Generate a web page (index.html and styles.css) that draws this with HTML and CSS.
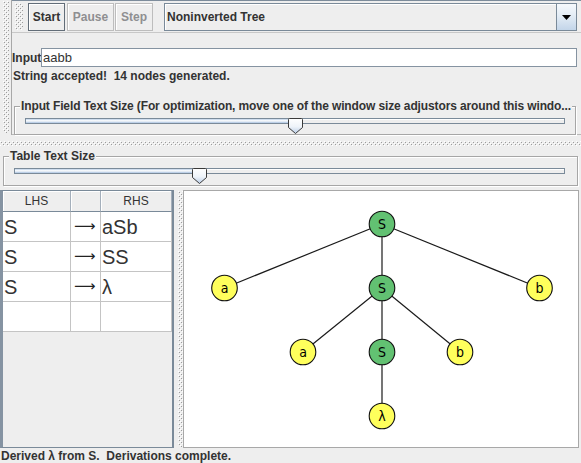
FILE: index.html
```html
<!DOCTYPE html>
<html>
<head>
<meta charset="utf-8">
<link rel="stylesheet" href="styles.css">
</head>
<body>
<svg class="defs" width="0" height="0" aria-hidden="true">
  <defs>
    <pattern id="bump" width="4" height="4" patternUnits="userSpaceOnUse">
      <rect x="0" y="0" width="1" height="1" fill="#ffffff"/>
      <rect x="2" y="2" width="1" height="1" fill="#ffffff"/>
      <rect x="1" y="1" width="1" height="1" fill="#9c9c9c"/>
      <rect x="3" y="3" width="1" height="1" fill="#9c9c9c"/>
    </pattern>
    <linearGradient id="thumbg" x1="0" y1="0" x2="0" y2="1">
      <stop offset="0" stop-color="#ffffff"/>
      <stop offset="0.55" stop-color="#eef3f9"/>
      <stop offset="1" stop-color="#b9cde6"/>
    </linearGradient>
  </defs>
</svg>
<div class="app">
  <div class="top">
    <div class="vgrip"><svg class="bumps"><rect width="100%" height="100%" fill="url(#bump)"/></svg></div>
    <div class="topmain">
      <div class="toolbar">
        <svg class="grip bumps"><rect width="100%" height="100%" fill="url(#bump)"/></svg>
        <button class="btn btn-start">Start</button>
        <button class="btn btn-off btn-pause">Pause</button>
        <button class="btn btn-off btn-step">Step</button>
        <div class="combo">
          <span class="combo-text">Noninverted Tree</span>
          <span class="combo-arrow"><svg width="9" height="5" viewBox="0 0 9 5"><path d="M0 0H9L4.5 5Z" fill="#000"/></svg></span>
        </div>
      </div>
      <div class="inputrow">
        <span class="inlabel">Input</span>
        <div class="field">aabb</div>
      </div>
      <div class="msg">String accepted!  14 nodes generated.</div>
      <div class="tbox tbox1">
        <div class="tbox-title title1">Input Field Text Size (For optimization, move one of the window size adjustors around this windo...</div>
        <div class="slider">
          <div class="track"><div class="fill fill1"></div><div class="rest"></div></div>
          <svg class="thumb thumb1" width="15" height="16" viewBox="0 0 15 16"><path d="M1.5 0.5H13.5Q14.5 0.5 14.5 1.5V9.5L7.5 15.5L0.5 9.5V1.5Q0.5 0.5 1.5 0.5Z" fill="url(#thumbg)" stroke="#3a3a3a"/></svg>
        </div>
      </div>
    </div>
  </div>
  <div class="hdiv"><svg class="bumps"><rect width="100%" height="100%" fill="url(#bump)"/></svg></div>
  <div class="tbox tbox2">
    <div class="tbox-title">Table Text Size</div>
    <div class="slider slider2">
      <div class="track"><div class="fill fill2"></div><div class="rest"></div></div>
      <svg class="thumb thumb2" width="15" height="16" viewBox="0 0 15 16"><path d="M1.5 0.5H13.5Q14.5 0.5 14.5 1.5V9.5L7.5 15.5L0.5 9.5V1.5Q0.5 0.5 1.5 0.5Z" fill="url(#thumbg)" stroke="#3a3a3a"/></svg>
    </div>
  </div>
  <div class="bottom">
    <div class="tablepane">
      <div class="grid">
        <div class="th">LHS</div><div class="th"></div><div class="th">RHS</div>
        <div class="td">S</div><div class="td arrow">⟶</div><div class="td">aSb</div>
        <div class="td">S</div><div class="td arrow">⟶</div><div class="td">SS</div>
        <div class="td">S</div><div class="td arrow">⟶</div><div class="td">λ</div>
        <div class="td"></div><div class="td"></div><div class="td"></div>
      </div>
    </div>
    <div class="vdiv"><svg class="bumps"><rect width="100%" height="100%" fill="url(#bump)"/></svg></div>
    <div class="canvas">
      <svg class="tree" width="394" height="256" viewBox="184 189 394 256">
        <g stroke="#1a1a1a" stroke-width="1.2">
          <line x1="382" y1="222" x2="224.5" y2="286"/>
          <line x1="382" y1="222" x2="382" y2="286"/>
          <line x1="382" y1="222" x2="539.5" y2="286"/>
          <line x1="382" y1="286" x2="303" y2="350"/>
          <line x1="382" y1="286" x2="382" y2="350"/>
          <line x1="382" y1="286" x2="460" y2="350"/>
          <line x1="382" y1="350" x2="382" y2="414"/>
        </g>
        <g stroke="#111" stroke-width="1.1">
          <circle class="nt" cx="382" cy="222" r="12.8"/>
          <circle class="term" cx="224.5" cy="286" r="12.8"/>
          <circle class="nt" cx="382" cy="286" r="12.8"/>
          <circle class="term" cx="539.5" cy="286" r="12.8"/>
          <circle class="term" cx="303" cy="350" r="12.8"/>
          <circle class="nt" cx="382" cy="350" r="12.8"/>
          <circle class="term" cx="460" cy="350" r="12.8"/>
          <circle class="term" cx="382" cy="414" r="12.8"/>
        </g>
        <g class="lbl">
          <text x="382" y="227">S</text>
          <text x="224.5" y="291">a</text>
          <text x="382" y="291">S</text>
          <text x="539.5" y="291">b</text>
          <text x="303" y="355">a</text>
          <text x="382" y="355">S</text>
          <text x="460" y="355">b</text>
          <text x="382" y="419">λ</text>
        </g>
      </svg>
    </div>
  </div>
  <div class="status">Derived λ from S.  Derivations complete.</div>
</div>
</body>
</html>
```

FILE: styles.css
```css
html, body {
  margin: 0;
  padding: 0;
}
body {
  background: #eeeeee;
  font-family: "Liberation Sans", Arial, sans-serif;
  font-size: 12px;
  font-weight: bold;
  color: #333333;
}
.defs {
  position: absolute;
  width: 0;
  height: 0;
}
.app {
  width: 581px;
  height: 463px;
  display: flex;
  flex-direction: column;
  overflow: hidden;
}
.bumps {
  display: block;
}

/* top area */
.top {
  height: 135px;
  display: flex;
  flex: none;
}
.vgrip {
  width: 12px;
  box-sizing: border-box;
  border-right: 1px solid #a8a8a8;
  padding: 1px 2px 2px 3px;
  display: flex;
}
.vgrip .bumps {
  width: 6px;
  height: 100%;
}
.topmain {
  flex: 1;
  display: flex;
  flex-direction: column;
  border-bottom: 1px solid #b8b8b8;
  min-width: 0;
}
.toolbar {
  height: 33px;
  box-sizing: border-box;
  border-top: 1px solid #7d8c9b;
  border-bottom: 1px solid #c8c8c8;
  padding-top: 2px;
  display: flex;
  align-items: flex-start;
  flex: none;
}
.grip {
  width: 8px;
  height: 27px;
  margin: 0 5px 0 3px;
}
.btn {
  height: 28px;
  box-sizing: border-box;
  margin: 0;
  padding: 0;
  background: #eeeeee;
  font-family: "Liberation Sans", Arial, sans-serif;
  font-size: 12px;
  font-weight: bold;
  text-align: center;
}
.btn-start {
  width: 37px;
  margin-right: 2px;
  color: #333333;
  border: 1px solid #626d78;
  box-shadow: inset 1px 1px 0 #ffffff;
}
.btn-off {
  color: #8e8f91;
  border: 1px solid #bdbdbd;
  box-shadow: inset 1px 1px 0 #ffffff;
}
.btn-pause {
  width: 47px;
  margin-right: 1px;
}
.btn-step {
  width: 38px;
  margin-right: 11px;
}
.combo {
  width: 413px;
  height: 28px;
  box-sizing: border-box;
  border: 1px solid #7a8a99;
  box-shadow: inset 1px 1px 0 #ffffff;
  background: #eeeeee;
  display: flex;
  align-items: stretch;
}
.combo-text {
  padding-left: 2px;
  line-height: 26px;
}
.combo-arrow {
  margin-left: auto;
  width: 20px;
  box-sizing: border-box;
  border-left: 1px solid #7a8a99;
  background: linear-gradient(180deg, #f6f9fc 0%, #e3ecf5 45%, #c3d5e9 100%);
  display: flex;
  align-items: center;
  justify-content: center;
}
.combo-arrow svg {
  display: block;
}
.inputrow {
  margin-top: 15px;
  height: 19px;
  display: flex;
  align-items: center;
  flex: none;
}
.inlabel {
  width: 29px;
}
.field {
  width: 536px;
  height: 19px;
  box-sizing: border-box;
  border: 1px solid #8593a1;
  background: #ffffff;
  padding-left: 1px;
  font-size: 13px;
  font-weight: normal;
  line-height: 17px;
  color: #333333;
}
.msg {
  margin: 2px 0 0 1px;
  line-height: 14px;
  white-space: pre;
}

/* titled borders */
.tbox {
  border: 1px solid #a6a6a6;
  box-shadow: inset 1px 1px 0 #ffffff, 1px 1px 0 #ffffff;
  flex: none;
}
.tbox-title {
  width: max-content;
  margin: -8px 0 0 -5px;
  padding: 0 1px;
  line-height: 14px;
  white-space: nowrap;
  background: #eeeeee;
}
.title1 {
  letter-spacing: -0.12px;
}
.tbox1 {
  margin: 23px 5px 0 2px;
  padding: 0 10px 0 10px;
}
.tbox2 {
  margin: 7px 3px 4px 3px;
  padding: 0 12px 0 10px;
}
.slider {
  height: 16px;
  margin-top: 2px;
  position: relative;
}
.slider2 {
  height: 17px;
  margin-top: 3px;
}
.track {
  margin-top: 5px;
  height: 6px;
  display: flex;
}
.fill {
  height: 6px;
  box-sizing: border-box;
  border: 1px solid #7a8a99;
  border-right: none;
  background: linear-gradient(180deg, #bcd0e8 0%, #ffffff 45%, #a9c2e0 100%);
}
.fill1 {
  width: 270px;
}
.fill2 {
  width: 185px;
}
.rest {
  flex: 1;
  height: 6px;
  box-sizing: border-box;
  border: 1px solid #7a8a99;
  border-left: none;
  background: #eeeeee;
  box-shadow: inset 0 1px 0 #ffffff;
}
.thumb {
  position: absolute;
  top: 0;
  display: block;
}
.thumb1 {
  left: 263px;
}
.thumb2 {
  left: 178px;
}

/* split divider */
.hdiv {
  height: 14px;
  box-sizing: border-box;
  padding-top: 6px;
  flex: none;
}
.hdiv .bumps {
  width: 100%;
  height: 5px;
}

/* bottom */
.bottom {
  height: 258px;
  display: flex;
  flex: none;
}
.tablepane {
  width: 174px;
  box-sizing: border-box;
  border-left: 3px solid #8593a2;
  border-top: 1px solid #7a8a99;
  border-right: 2px solid #7a8a99;
  border-bottom: 1px solid #7a8a99;
  background: #eeeeee;
}
.grid {
  display: grid;
  grid-template-columns: 68px 30px 71px;
  grid-template-rows: 21px repeat(4, 30px);
}
.th {
  box-sizing: border-box;
  background: #eeeeee;
  border-right: 1px solid #a4afbb;
  border-bottom: 1px solid #7a8a99;
  box-shadow: inset 1px 1px 0 #ffffff;
  font-weight: normal;
  font-size: 12px;
  line-height: 20px;
  text-align: center;
}
.td {
  box-sizing: border-box;
  background: #ffffff;
  border-right: 1px solid #c4c4c4;
  border-bottom: 1px solid #c4c4c4;
  padding: 2px 0 0 1px;
  font-weight: normal;
  font-size: 20px;
  line-height: 27px;
  color: #333333;
}
.arrow {
  font-family: "DejaVu Sans", sans-serif;
  font-size: 15px;
  color: #222222;
  padding: 0 0 0 3px;
  line-height: 28px;
}
.vdiv {
  width: 9px;
  box-sizing: border-box;
  padding: 1px 0 1px 4px;
  display: flex;
}
.vdiv .bumps {
  width: 5px;
  height: 100%;
}
.canvas {
  width: 396px;
  margin-right: 2px;
  box-sizing: border-box;
  border: 1px solid #a8a8a8;
  background: #ffffff;
}
.tree {
  display: block;
}
.nt {
  fill: #62c172;
}
.term {
  fill: #ffff5c;
}
.lbl text {
  font-family: "Liberation Sans Narrow", "DejaVu Sans Condensed", "Liberation Sans", sans-serif;
  font-size: 14px;
  font-weight: normal;
  fill: #000000;
  text-anchor: middle;
}

/* status */
.status {
  height: 17px;
  line-height: 17px;
  padding-left: 1px;
  white-space: pre;
  flex: none;
}
```
